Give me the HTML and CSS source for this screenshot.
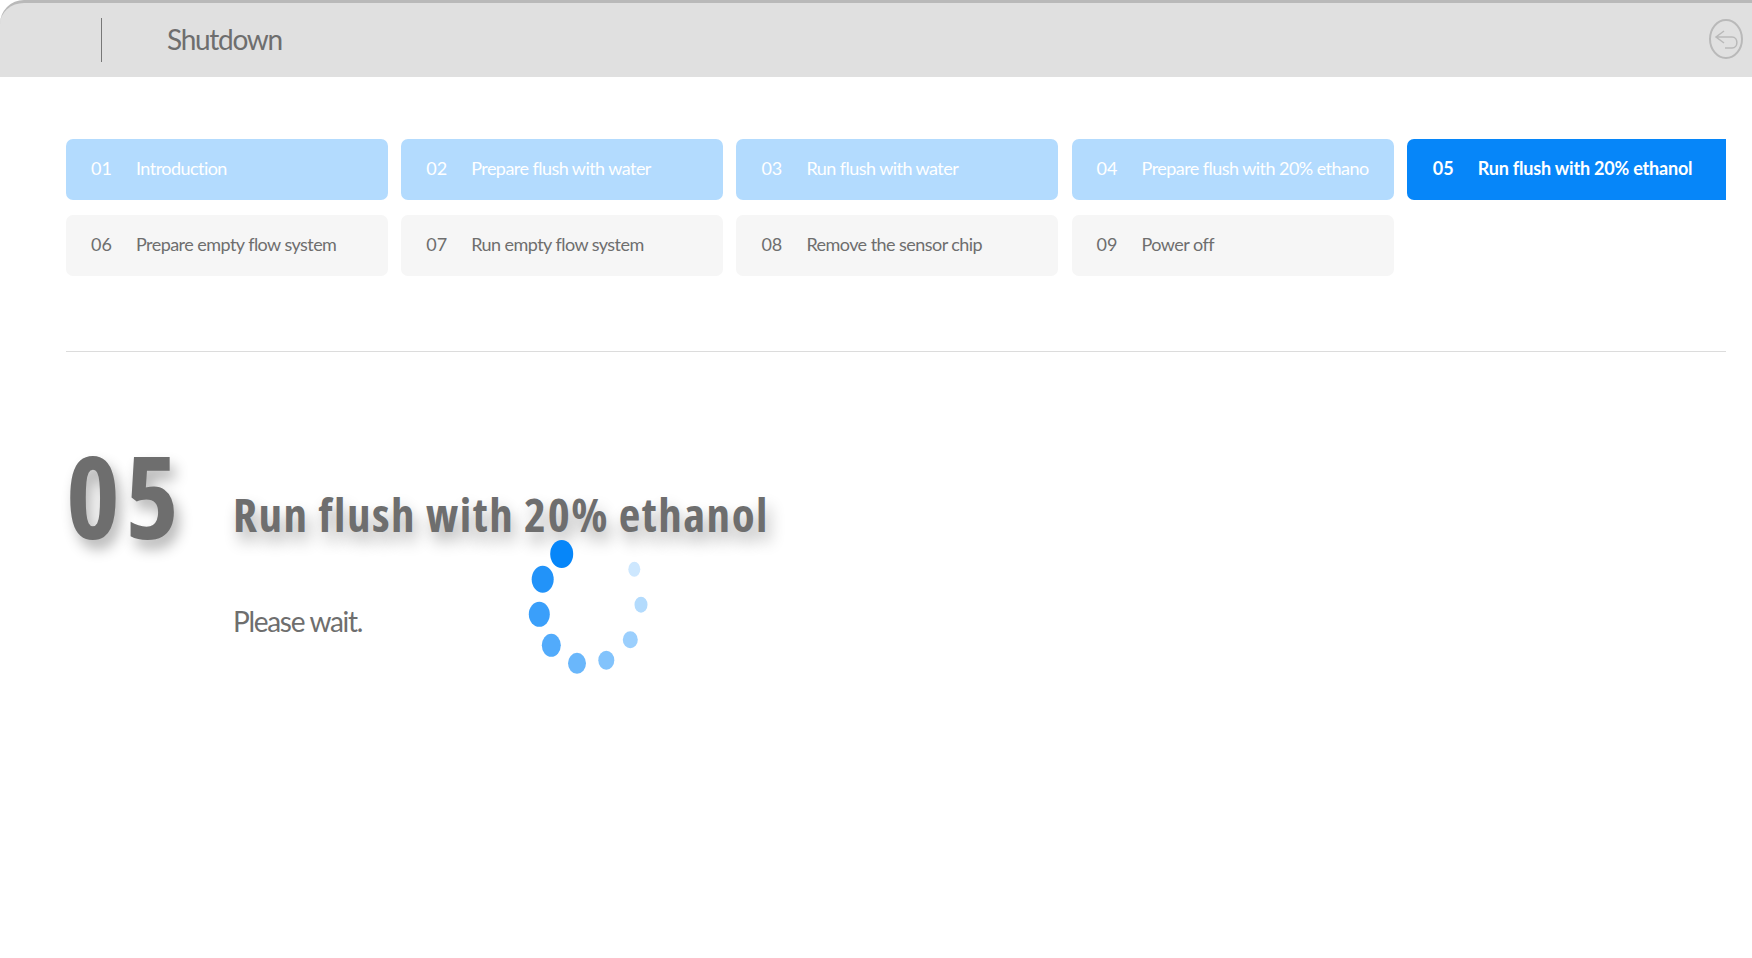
FILE: index.html
```html
<!DOCTYPE html>
<html lang="en">
<head>
<meta charset="utf-8">
<title>Shutdown</title>
<link rel="stylesheet" href="styles.css">
</head>
<body>
<div class="page">
  <header class="topbar">
    <span class="divider"></span>
    <h1 class="page-title">Shutdown</h1>
    <svg class="back" viewBox="0 0 36 40" width="36" height="40" fill="none" stroke="#b9b9b9" stroke-width="2">
      <ellipse cx="18" cy="20" rx="16" ry="19"/>
      <path d="M16 12 L8 18 L16 24 M8 18 H24 C30.500 18 30.500 29 24 29 H17" stroke-width="1.500"/>
    </svg>
  </header>
  <section class="steps">
    <div class="step done"><span class="num">01</span><span class="label">Introduction</span></div>
    <div class="step done"><span class="num">02</span><span class="label">Prepare flush with water</span></div>
    <div class="step done"><span class="num">03</span><span class="label">Run flush with water</span></div>
    <div class="step done"><span class="num">04</span><span class="label">Prepare flush with 20% ethano</span></div>
    <div class="step active"><span class="num">05</span><span class="label">Run flush with 20% ethanol</span></div>
    <div class="step"><span class="num">06</span><span class="label">Prepare empty flow system</span></div>
    <div class="step"><span class="num">07</span><span class="label">Run empty flow system</span></div>
    <div class="step"><span class="num">08</span><span class="label">Remove the sensor chip</span></div>
    <div class="step"><span class="num">09</span><span class="label">Power off</span></div>
  </section>
  <hr class="rule">
  <section class="detail">
    <div class="big-num">05</div>
    <div class="detail-body">
      <h2 class="detail-title">Run flush with 20% ethanol</h2>
      <p class="detail-text">Please wait.</p>
    </div>
    <svg class="spinner" width="150" height="150" viewBox="0 0 150 150">
      <ellipse cx="51.700" cy="24" rx="11.500" ry="14" fill="#0686f9"/>
      <ellipse cx="32.700" cy="49.300" rx="11" ry="13.500" fill="#2293f9"/>
      <ellipse cx="29.300" cy="84.300" rx="10.500" ry="12.500" fill="#3a9ffa"/>
      <ellipse cx="41.300" cy="115.300" rx="9.500" ry="11.500" fill="#52abfb"/>
      <ellipse cx="67" cy="133.300" rx="9" ry="10.500" fill="#6ab7fb"/>
      <ellipse cx="96.300" cy="130.300" rx="8" ry="9.500" fill="#82c3fc"/>
      <ellipse cx="120.300" cy="109.700" rx="7.500" ry="8.500" fill="#9bcffd"/>
      <ellipse cx="131" cy="74.700" rx="6.500" ry="8" fill="#b3dbfd"/>
      <ellipse cx="124.300" cy="39.300" rx="6" ry="7.500" fill="#cde7fe"/>
    </svg>
  </section>
</div>
</body>
</html>
```
FILE: styles.css
```css
* { box-sizing: border-box; }
html, body { margin: 0; height: 100%; background: #fff; overflow: hidden; }
body { font-family: Lato, "Open Sans", sans-serif; color: #6e6e6e; }
.page { width: 1752px; height: 958px; }
.topbar {
  height: 77px;
  background: #e0e0e0;
  border-top: 3px solid #b9b9b9;
  border-top-left-radius: 24px;
  display: flex;
  align-items: center;
  padding: 0 8px 0 100.500px;
}
.divider { width: 1.500px; height: 44px; background: #777; }
.page-title {
  margin: -2px 0 0 65px;
  font-size: 28px;
  font-weight: 400;
  letter-spacing: -1.300px;
  color: #6e6e6e;
}
.back { margin-left: auto; margin-top: -3px; }
.steps {
  margin: 62px 26px 0 66px;
  display: grid;
  grid-template-columns: repeat(4, 322px) 319px;
  column-gap: 13.200px;
  row-gap: 15px;
}
.step {
  height: 61px;
  border-radius: 7px;
  background: #f6f6f6;
  display: flex;
  align-items: center;
  padding: 0 0 4px 25px;
  font-size: 18px;
  letter-spacing: -0.550px;
  color: #6e6e6e;
  white-space: nowrap;
  overflow: hidden;
}
.num { width: 45px; flex: none; letter-spacing: 0; }
.step.done { background: #b3dbfe; color: #fff; }
.step.active {
  background: #0686f9;
  color: #fff;
  font-weight: 700;
  letter-spacing: -0.200px;
  border-radius: 7px 0 0 7px;
  padding-left: 26px;
}
.rule { margin: 75px 26px 0 66px; border: 0; border-top: 1px solid #dcdcdc; }
.detail { position: relative; display: flex; margin: 90px 0 0 66px; }
.big-num {
  width: 167px;
  margin-top: -12px;
  font-family: "Open Sans", Lato, sans-serif;
  font-stretch: 75%;
  font-size: 115px;
  font-weight: 700;
  line-height: 130px;
  letter-spacing: 5px;
  color: #6e6e6e;
  text-shadow: 5px 9px 14px rgba(0,0,0,.3);
}
.detail-title {
  margin: 40px 0 0;
  font-family: "Open Sans", Lato, sans-serif;
  font-stretch: 75%;
  font-size: 47px;
  line-height: 64px;
  font-weight: 700;
  letter-spacing: 1.500px;
  color: #6e6e6e;
  text-shadow: 4px 10px 15px rgba(0,0,0,.3);
}
.detail-text {
  margin: 57px 0 0;
  font-size: 28px;
  line-height: 36px;
  letter-spacing: -1.300px;
  color: #6e6e6e;
}
.spinner { position: absolute; left: 444px; top: 88px; }
```
